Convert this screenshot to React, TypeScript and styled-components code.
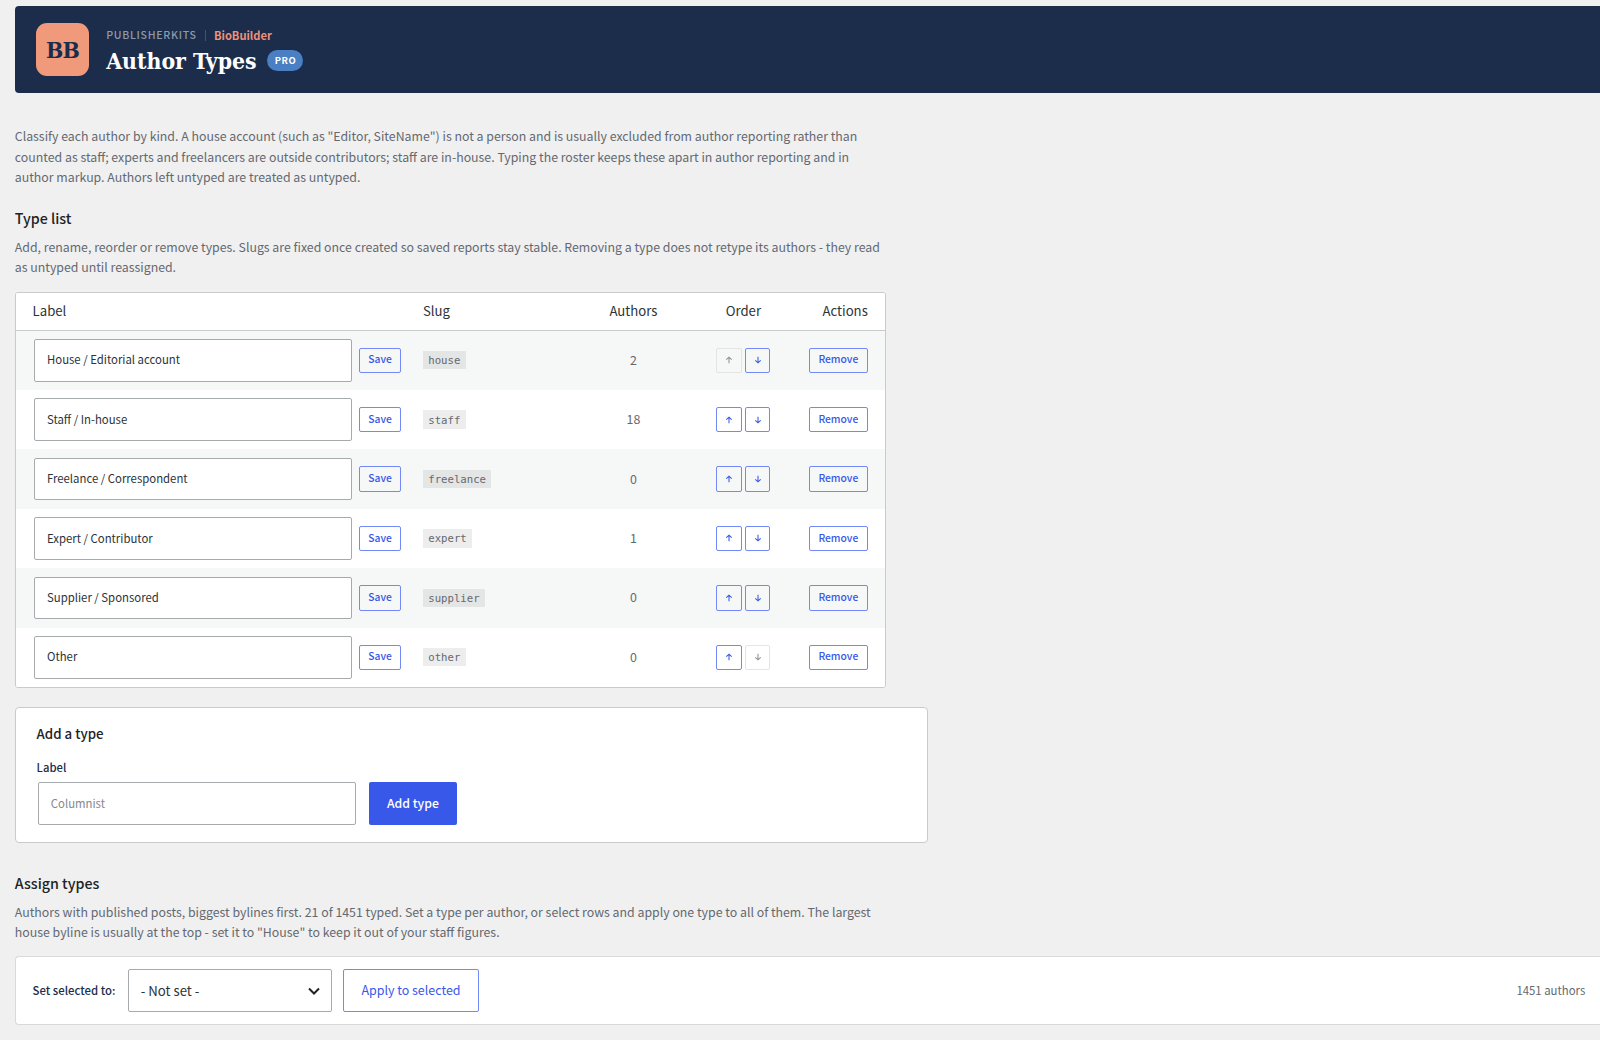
import React from 'react';
import styled, { createGlobalStyle } from 'styled-components';

const Global = createGlobalStyle`
  *, *::before, *::after { box-sizing: border-box; }
  body {
    margin: 0;
    background: #f0f0f0;
    color: #646970;
    font-family: "Noto Sans CJK SC", "Noto Sans", sans-serif;
    overflow: hidden;
  }
  input, button, select { font-family: inherit; margin: 0; }
`;

const Page = styled.main`
  display: flex;
  flex-direction: column;
  align-items: flex-start;
  width: 1600px;
  height: 1040px;
  padding: 6.4px 0 0 14.8px;
  overflow: hidden;
`;

const Header = styled.header`
  display: flex;
  align-items: center;
  align-self: stretch;
  gap: 17.2px;
  height: 87px;
  padding: 0 21.2px;
  background: #1b2d4b;
  border-radius: 4px 0 0 4px;
`;

const Logo = styled.div`
  display: flex;
  align-items: center;
  justify-content: center;
  width: 53px;
  height: 53px;
  border-radius: 11px;
  background: #f0997b;
  color: #1b2d4b;
  font: 700 22.8px/53px "DejaVu Serif Condensed", "DejaVu Serif", serif;
  letter-spacing: -0.9px;
  padding-top: 2px;
`;

const Brand = styled.div`
  display: flex;
  flex-direction: column;
  padding-top: 3px;
`;

const Crumbs = styled.div`
  display: flex;
  align-items: center;
  height: 18px;
  font-size: 11.1px;
  line-height: 18px;
  font-weight: 500;
`;

const Vendor = styled.span`
  color: #8f9aa8;
  font-size: 10.6px;
  font-weight: 500;
  letter-spacing: 0.7px;
`;

const Divider = styled.span`
  width: 1px;
  height: 11px;
  margin: 2px 8px 0 8.4px;
  background: #44536b;
`;

const Product = styled.span`
  color: #f0917a;
  font-size: 11.1px;
  font-weight: 700;
`;

const TitleRow = styled.div`
  display: flex;
  align-items: center;
  gap: 10.8px;
  height: 33px;
`;

const Title = styled.h1`
  margin: 0;
  padding-top: 2px;
  color: #fff;
  font: 700 22.8px/33px "DejaVu Serif Condensed", "DejaVu Serif", serif;
`;

const Pill = styled.span`
  width: 36px;
  height: 21.6px;
  border-radius: 11px;
  background: #4a7fc4;
  color: #fff;
  font-size: 9.4px;
  font-weight: 700;
  line-height: 20.4px;
  letter-spacing: 0.5px;
  text-align: center;
`;

const Copy = styled.p<{ $top: string }>`
  margin: ${p => p.$top} 0 0;
  font-size: 12.34px;
  line-height: 20.7px;
  white-space: nowrap;
`;

const Heading = styled.h2<{ $top: string }>`
  margin: ${p => p.$top} 0 0;
  color: #1d2327;
  font-size: 14.24px;
  line-height: 24px;
  font-weight: 500;
`;

const Table = styled.section`
  width: 871px;
  margin-top: 14.3px;
  border: 1px solid #c9cacc;
  border-radius: 3px;
  background: #fff;
  overflow: hidden;
`;

const Row = styled.div<{ $striped?: boolean }>`
  display: grid;
  grid-template-columns: 390.3px 164.2px 92.8px 127px 1fr;
  align-items: center;
  height: 59.4px;
  padding: 0 17px 0 16.8px;
  background: ${p => (p.$striped ? '#f6f7f7' : '#fff')};
`;

const HeadRow = styled(Row)`
  height: 37.2px;
  border-bottom: 1px solid #c9cacc;
  color: #2c3338;
  font-size: 13.17px;
  line-height: 20px;
`;

const Cell = styled.div<{ $align?: string }>`
  display: flex;
  align-items: center;
  justify-content: ${p => p.$align || 'flex-start'};
`;

const LabelCell = styled(Cell)`
  gap: 7px;
  padding-left: 1.4px;
`;

const OrderCell = styled(Cell)`
  gap: 3.6px;
`;

const Count = styled(Cell)`
  padding-bottom: 0.8px;
  font-size: 12.4px;
  line-height: 20px;
`;

const TextField = styled.input`
  width: 318px;
  height: 42.6px;
  padding: 0 12px 1.6px;
  border: 1px solid #a7aaad;
  border-radius: 2px;
  background: #fff;
  color: #2c3338;
  font-size: 11.36px;
  outline: none;
  &::placeholder { color: #85888b; opacity: 1; }
`;

const Button = styled.button<{ $w: number }>`
  display: inline-flex;
  align-items: center;
  justify-content: center;
  flex: none;
  width: ${p => p.$w}px;
  height: 25.4px;
  padding: 0 0 1.6px;
  border: 1px solid #7389f5;
  border-radius: 2px;
  background: transparent;
  color: #3858e9;
  font-size: 10.3px;
  line-height: 16px;
  font-weight: 500;
  &:disabled { border-color: #e3e4e5; color: #8f9295; }
`;

const Arrow = styled.svg`
  display: block;
  margin-top: 1.4px;
`;

const Slug = styled.code`
  padding: 1.2px 5.4px 0;
  height: 18.4px;
  background: rgba(0, 0, 0, 0.07);
  font: 10.67px/18.6px "DejaVu Sans Mono", monospace;
`;

const AddCard = styled.section`
  display: flex;
  flex-direction: column;
  width: 913px;
  height: 135.8px;
  margin-top: 19px;
  padding: 15.6px 20.8px 0;
  border: 1px solid #c9cacc;
  border-radius: 4px;
  background: #fff;
`;

const CardTitle = styled.h3`
  margin: 0;
  color: #1d2327;
  font-size: 13.29px;
  line-height: 20px;
  font-weight: 500;
`;

const FieldLabel = styled.label`
  color: #1b2d4b;
  font-size: 11.3px;
  line-height: 18px;
  font-weight: 500;
  margin-top: 14.6px;
`;

const AddLine = styled.div`
  display: flex;
  gap: 13.4px;
  margin: 6.2px 0 0 1.2px;
`;

const Primary = styled.button`
  width: 87.4px;
  height: 42.6px;
  padding: 0 0 1.6px;
  border: 0;
  border-radius: 2px;
  background: #3858e9;
  color: #fff;
  font-size: 12.26px;
  font-weight: 500;
`;

const BulkBar = styled.section`
  display: flex;
  align-items: center;
  align-self: stretch;
  height: 69px;
  margin-top: 13.1px;
  padding: 0 14.8px 0 16.7px;
  border: 1px solid #d8d9da;
  border-right: 0;
  border-radius: 4px 0 0 4px;
  background: #fff;
`;

const BulkLabel = styled.label`
  width: 95.5px;
  padding-bottom: 1.6px;
  color: #1b2d4b;
  font-size: 11.38px;
  line-height: 20px;
  font-weight: 500;
  white-space: nowrap;
`;

const Select = styled.div`
  display: flex;
  align-items: center;
  justify-content: space-between;
  width: 204px;
  height: 43px;
  padding: 0 11px 0 11.8px;
  border: 1px solid #a7aaad;
  border-radius: 2px;
  color: #2c3338;
  font-size: 13.2px;
  line-height: 20px;
`;

const Apply = styled.button`
  width: 135.6px;
  height: 43px;
  margin-left: 11.2px;
  padding: 0 0 1px;
  border: 1px solid #7389f5;
  border-radius: 2px;
  background: transparent;
  color: #3858e9;
  font-size: 12.46px;
`;

const Total = styled.span`
  margin-left: auto;
  padding-bottom: 1.6px;
  font-size: 11.36px;
  line-height: 20px;
`;

const types = [
  { label: 'House / Editorial account', slug: 'house', authors: 2 },
  { label: 'Staff / In-house', slug: 'staff', authors: 18 },
  { label: 'Freelance / Correspondent', slug: 'freelance', authors: 0 },
  { label: 'Expert / Contributor', slug: 'expert', authors: 1 },
  { label: 'Supplier / Sponsored', slug: 'supplier', authors: 0 },
  { label: 'Other', slug: 'other', authors: 0 },
];

function ArrowIcon({ down = false }: { down?: boolean }) {
  return (
    <Arrow width="8" height="8" viewBox="0 0 8 8" fill="none" stroke="currentColor" strokeWidth="1.05">
      <path d={down ? 'M4 .8v6.1M1.3 4.4 4 6.9l2.7-2.5' : 'M4 7.2V1.1M1.3 3.6 4 1.1l2.7 2.5'} />
    </Arrow>
  );
}

export default function App() {
  return (
    <>
      <Global />
      <Page>
        <Header>
          <Logo>BB</Logo>
          <Brand>
            <Crumbs>
              <Vendor>PUBLISHERKITS</Vendor>
              <Divider />
              <Product>BioBuilder</Product>
            </Crumbs>
            <TitleRow>
              <Title>Author Types</Title>
              <Pill>PRO</Pill>
            </TitleRow>
          </Brand>
        </Header>

        <Copy $top="32.6px">
          Classify each author by kind. A house account (such as "Editor, SiteName") is not a person and is usually excluded from author reporting rather than
          <br />
          counted as staff; experts and freelancers are outside contributors; staff are in-house. Typing the roster keeps these apart in author reporting and in
          <br />
          author markup. Authors left untyped are treated as untyped.
        </Copy>

        <Heading $top="18.1px">Type list</Heading>
        <Copy $top="6.5px">
          Add, rename, reorder or remove types. Slugs are fixed once created so saved reports stay stable. Removing a type does not retype its authors - they read
          <br />
          as untyped until reassigned.
        </Copy>

        <Table>
          <HeadRow>
            <Cell>Label</Cell>
            <Cell>Slug</Cell>
            <Cell $align="center">Authors</Cell>
            <Cell $align="center">Order</Cell>
            <Cell $align="flex-end">Actions</Cell>
          </HeadRow>
          {types.map((t, i) => (
            <Row key={t.slug} $striped={i % 2 === 0}>
              <LabelCell>
                <TextField defaultValue={t.label} />
                <Button $w={42}>Save</Button>
              </LabelCell>
              <Cell><Slug>{t.slug}</Slug></Cell>
              <Count $align="center">{t.authors}</Count>
              <OrderCell $align="center">
                <Button $w={25.2} disabled={i === 0}><ArrowIcon /></Button>
                <Button $w={25.2} disabled={i === types.length - 1}><ArrowIcon down /></Button>
              </OrderCell>
              <Cell $align="flex-end"><Button $w={59}>Remove</Button></Cell>
            </Row>
          ))}
        </Table>

        <AddCard>
          <CardTitle>Add a type</CardTitle>
          <FieldLabel>Label</FieldLabel>
          <AddLine>
            <TextField placeholder="Columnist" />
            <Primary>Add type</Primary>
          </AddLine>
        </AddCard>

        <Heading $top="28px">Assign types</Heading>
        <Copy $top="7px">
          Authors with published posts, biggest bylines first. 21 of 1451 typed. Set a type per author, or select rows and apply one type to all of them. The largest
          <br />
          house byline is usually at the top - set it to "House" to keep it out of your staff figures.
        </Copy>

        <BulkBar>
          <BulkLabel>Set selected to:</BulkLabel>
          <Select>
            - Not set -
            <svg width="12" height="8" viewBox="0 0 12 8" fill="none" stroke="#1d2327" strokeWidth="2">
              <path d="M1 1.5 6 6.5l5-5" />
            </svg>
          </Select>
          <Apply>Apply to selected</Apply>
          <Total>1451 authors</Total>
        </BulkBar>
      </Page>
    </>
  );
}
